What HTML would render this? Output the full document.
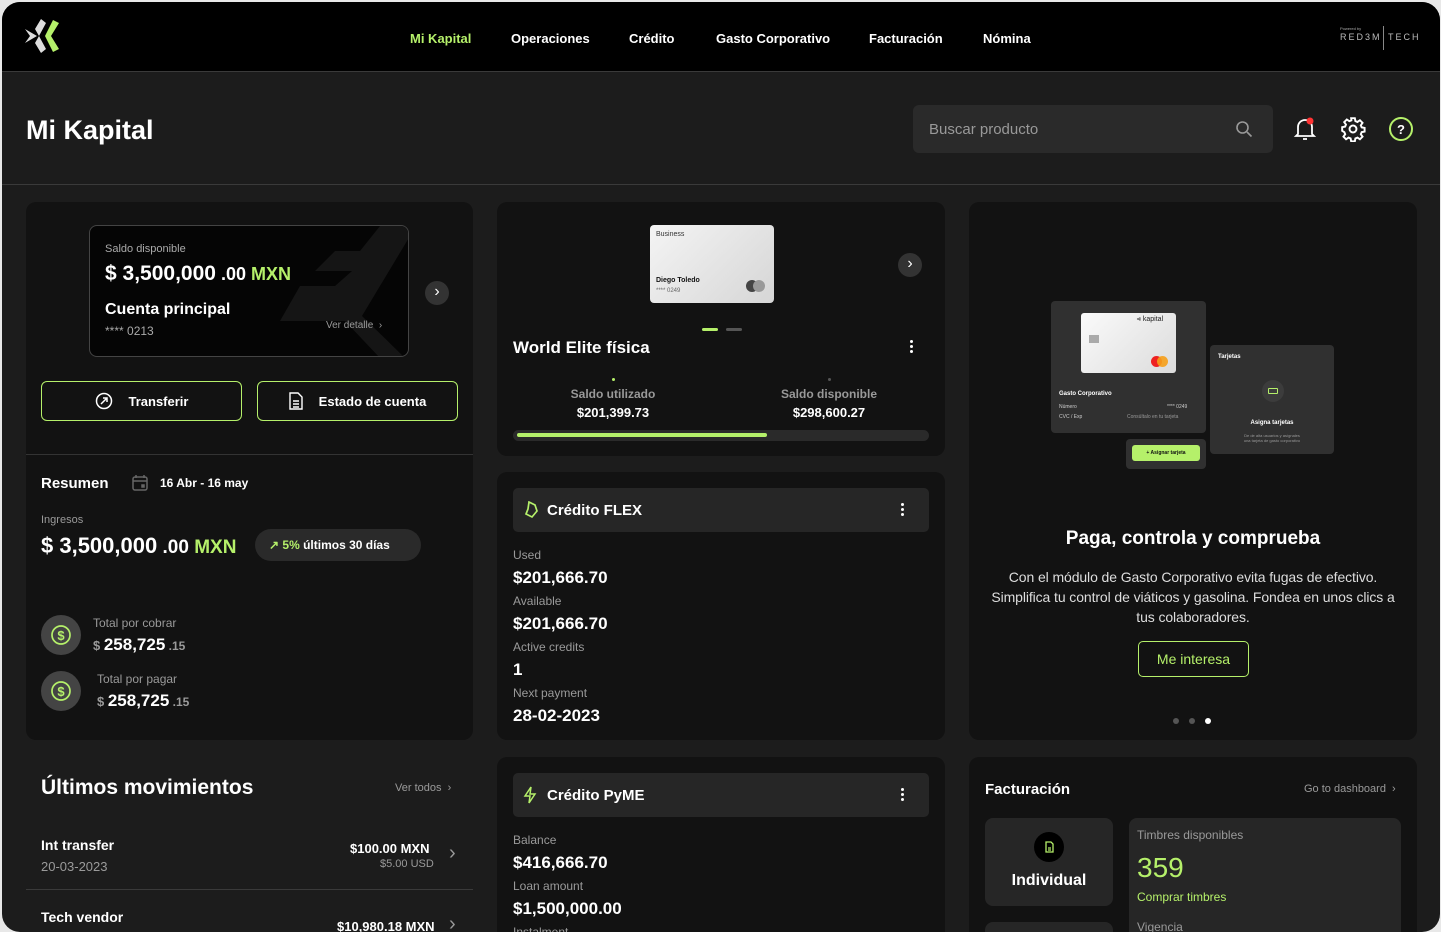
<!DOCTYPE html>
<html><head><meta charset="utf-8"><style>
*{margin:0;padding:0;box-sizing:border-box}
body{width:1441px;height:932px;background:#e8e8e8;font-family:"Liberation Sans",sans-serif;color:#fff;overflow:hidden;position:relative}
.a{position:absolute}
.frame{position:absolute;left:2px;top:2px;width:1438px;height:930px;background:#1c1c1c;border-radius:18px 18px 18px 18px;overflow:hidden}
.nav{position:absolute;left:0;top:0;width:100%;height:70px;background:#000;border-bottom:1px solid #3a3a3a}
.nav span{position:absolute;top:29px;font-size:13px;font-weight:bold;color:#fff}
.nav span.gg{color:#b5f06a}
.card{position:absolute;background:#121212;border-radius:10px}
.g{color:#b5f06a}
.mu{color:#9a9a9a}
.b{font-weight:bold}
.btn{position:absolute;border:1px solid #b5f06a;border-radius:6px;height:40px;font-size:13px;font-weight:bold;display:flex;align-items:center;justify-content:center;gap:16px}
.hdr{position:absolute;background:#262626;border-radius:5px;height:44px}
.lbl{position:absolute;font-size:12px;color:#9a9a9a}
.val{position:absolute;font-size:17px;font-weight:bold}
.dots{position:absolute;width:4px}
.dots i{display:block;width:3px;height:3px;background:#fff;border-radius:50%;margin-bottom:2px}
</style></head><body>
<div class="frame">
<div class="nav">
 <svg class="a" style="left:22px;top:14px" width="36" height="40" viewBox="0 0 36 40"><path d="M1 13 L13 20 L1 27 L6 20Z" fill="#ddd"/><path d="M17 3 L22 7 L15 20 L22 33 L17 37 L11 27 L15 20 L11 13Z" fill="#ddd"/><path d="M29 4 L35 7 L27 20 L35 33 L29 36 L21 20Z" fill="#b5f06a"/></svg>
 <span class="gg" style="left:408px">Mi Kapital</span>
 <span style="left:509px">Operaciones</span>
 <span style="left:627px">Crédito</span>
 <span style="left:714px">Gasto Corporativo</span>
 <span style="left:867px">Facturación</span>
 <span style="left:981px">Nómina</span>
 <div class="a" style="left:1338px;top:24px;font-size:4px;color:#aaa">Powered by</div>
 <div class="a" style="left:1338px;top:30px;font-size:9px;letter-spacing:2px;color:#bbb">RED3M</div>
 <div class="a" style="left:1381px;top:24px;width:1px;height:24px;background:#888"></div>
 <div class="a" style="left:1386px;top:30px;font-size:9px;letter-spacing:2px;color:#bbb">TECH</div>
</div>
<div class="a b" style="left:24px;top:113px;font-size:27px">Mi Kapital</div>
<div class="a" style="left:911px;top:103px;width:360px;height:48px;background:#2a2a2a;border-radius:6px"><span class="a" style="left:16px;top:16px;font-size:15px;color:#999">Buscar producto</span>
<svg class="a" style="left:322px;top:15px" width="18" height="18" viewBox="0 0 18 18" fill="none" stroke="#999" stroke-width="1.6"><circle cx="7.5" cy="7.5" r="5.5"/><path d="M12 12l4.5 4.5"/></svg></div>
<svg class="a" style="left:1291px;top:114px" width="24" height="26" viewBox="0 0 24 26" fill="none" stroke="#fff" stroke-width="1.8"><path d="M5 18V11a7 7 0 0114 0v7l2 2H3z"/><path d="M10 23h4"/><circle cx="17" cy="5" r="3.5" fill="#f33" stroke="none"/></svg>
<svg class="a" style="left:1338px;top:114px" width="26" height="26" viewBox="0 0 24 24" fill="none" stroke="#fff" stroke-width="1.8"><circle cx="12" cy="12" r="3.2"/><path d="M10.3 2h3.4l.5 2.7 1.9.8 2.3-1.6 2.4 2.4-1.6 2.3.8 1.9 2.7.5v3.4l-2.7.5-.8 1.9 1.6 2.3-2.4 2.4-2.3-1.6-1.9.8-.5 2.7h-3.4l-.5-2.7-1.9-.8-2.3 1.6-2.4-2.4 1.6-2.3-.8-1.9L2 13.7v-3.4l2.7-.5.8-1.9-1.6-2.3 2.4-2.4 2.3 1.6 1.9-.8z"/></svg>
<svg class="a" style="left:1386px;top:114px" width="26" height="26" viewBox="0 0 26 26" fill="none" stroke="#b5f06a" stroke-width="2"><circle cx="13" cy="13" r="11"/><text x="13" y="18" font-size="13" font-weight="bold" fill="#fff" stroke="none" text-anchor="middle" font-family="Liberation Sans">?</text></svg>
<div class="a" style="left:0;top:182px;width:100%;height:1px;background:#3a3a3a"></div>

<!-- LEFT -->
<div class="card" style="left:24px;top:200px;width:447px;height:538px">
 <div class="a" style="left:63px;top:23px;width:320px;height:132px;background:#050505;border:1px solid #444;border-radius:8px;overflow:hidden">
  <svg class="a" style="left:0;top:0" width="320" height="132" viewBox="0 0 320 132"><path d="M290 0 H320 V10 L272 90 L315 132 H290 L255 95 H190 L210 60 H245 L262 45 H225 L245 25 H270Z" fill="#151515"/></svg>
  <div class="a mu" style="left:15px;top:17px;font-size:11px;color:#aaa">Saldo disponible</div>
  <div class="a b" style="left:15px;top:36px;font-size:21px">$ 3,500,000<span style="font-size:18px"> .00</span><span class="g" style="font-size:18px"> MXN</span></div>
  <div class="a b" style="left:15px;top:75px;font-size:16px">Cuenta principal</div>
  <div class="a" style="left:15px;top:98px;font-size:12px;color:#aaa">**** 0213</div>
  <div class="a" style="left:236px;top:94px;font-size:10px;color:#999">Ver detalle &nbsp;›</div>
 </div>
 <div class="a" style="left:399px;top:79px;width:24px;height:24px;border-radius:50%;background:#333;text-align:center;line-height:22px;font-size:16px">›</div>
 <div class="btn" style="left:15px;top:179px;width:201px"><svg width="18" height="18" viewBox="0 0 18 18" fill="none" stroke="#fff" stroke-width="1.5"><circle cx="9" cy="9" r="7.5"/><path d="M6 12l6-6M8 6h4v4"/></svg>Transferir</div>
 <div class="btn" style="left:231px;top:179px;width:201px"><svg width="14" height="18" viewBox="0 0 14 18" fill="none" stroke="#fff" stroke-width="1.4"><path d="M1 1h8l4 4v12H1z M4 9h6M4 12h6M4 15h6"/></svg>Estado de cuenta</div>
 <div class="a" style="left:0;top:252px;width:447px;height:1px;background:#333"></div>
 <div class="a b" style="left:15px;top:273px;font-size:15px">Resumen</div>
 <svg class="a" style="left:106px;top:273px" width="16" height="16" viewBox="0 0 16 16" fill="none" stroke="#666" stroke-width="1.5"><rect x="1" y="2" width="14" height="13" rx="2"/><path d="M1 6h14M4 0v3M12 0v3"/><rect x="10" y="10" width="2" height="2" fill="#666"/></svg>
 <div class="a b" style="left:134px;top:274px;font-size:12px">16 Abr - 16 may</div>
 <div class="a mu" style="left:15px;top:312px;font-size:11px">Ingresos</div>
 <div class="a b" style="left:15px;top:331px;font-size:22px">$ 3,500,000<span style="font-size:19px"> .00</span><span class="g" style="font-size:19px"> MXN</span></div>
 <div class="a" style="left:229px;top:327px;width:166px;height:32px;background:#2a2a2a;border-radius:16px;font-size:12px;font-weight:bold;line-height:32px;padding-left:14px"><span class="g">↗ 5%</span> últimos 30 días</div>
 <div class="a" style="left:15px;top:413px;width:40px;height:40px;border-radius:50%;background:#444"><svg width="40" height="40" viewBox="0 0 40 40" fill="none" stroke="#b5f06a" stroke-width="1.7"><circle cx="20" cy="20" r="9"/><text x="20" y="25" text-anchor="middle" font-size="13" font-weight="bold" fill="#b5f06a" stroke="none" font-family="Liberation Sans">$</text></svg></div>
 <div class="a mu" style="left:67px;top:414px;font-size:12px">Total por cobrar</div>
 <div class="a b" style="left:67px;top:433px;font-size:17px"><span class="mu" style="font-size:13px">$ </span>258,725<span class="mu" style="font-size:12px"> .15</span></div>
 <div class="a" style="left:15px;top:469px;width:40px;height:40px;border-radius:50%;background:#444"><svg width="40" height="40" viewBox="0 0 40 40" fill="none" stroke="#b5f06a" stroke-width="1.7"><circle cx="20" cy="20" r="9"/><text x="20" y="25" text-anchor="middle" font-size="13" font-weight="bold" fill="#b5f06a" stroke="none" font-family="Liberation Sans">$</text></svg></div>
 <div class="a mu" style="left:71px;top:470px;font-size:12px">Total por pagar</div>
 <div class="a b" style="left:71px;top:489px;font-size:17px"><span class="mu" style="font-size:13px">$ </span>258,725<span class="mu" style="font-size:12px"> .15</span></div>
</div>
<div class="a b" style="left:39px;top:774px;font-size:21px">Últimos movimientos</div>
<div class="a mu" style="left:393px;top:780px;font-size:11px">Ver todos &nbsp;›</div>
<div class="a b" style="left:39px;top:835px;font-size:14px">Int transfer</div>
<div class="a mu" style="left:39px;top:857px;font-size:13px">20-03-2023</div>
<div class="a b" style="left:348px;top:839px;font-size:13px">$100.00 MXN</div>
<div class="a mu" style="left:378px;top:856px;font-size:11px">$5.00 USD</div>
<div class="a mu" style="left:447px;top:840px;font-size:20px">›</div>
<div class="a" style="left:24px;top:887px;width:447px;height:1px;background:#3a3a3a"></div>
<div class="a b" style="left:39px;top:907px;font-size:14px">Tech vendor</div>
<div class="a b" style="left:335px;top:917px;font-size:13px">$10,980.18 MXN</div>
<div class="a mu" style="left:447px;top:911px;font-size:20px">›</div>

<!-- MIDDLE -->
<div class="card" style="left:495px;top:200px;width:448px;height:254px">
 <div class="a" style="left:153px;top:23px;width:124px;height:78px;border-radius:4px;background:linear-gradient(135deg,#f4f4f4,#d6d6d6)">
  <div class="a" style="left:6px;top:6px;font-size:7px;color:#333">Business</div>
  <div class="a" style="left:6px;top:52px;font-size:7px;color:#111;font-weight:bold">Diego Toledo</div>
  <div class="a" style="left:6px;top:63px;font-size:6px;color:#666">**** 0249</div>
  <div class="a" style="left:96px;top:55px;width:12px;height:12px;border-radius:50%;background:#444"></div><div class="a" style="left:103px;top:55px;width:12px;height:12px;border-radius:50%;background:#999"></div>
 </div>
 <div class="a" style="left:401px;top:51px;width:24px;height:24px;border-radius:50%;background:#333;text-align:center;line-height:22px;font-size:16px">›</div>
 <div class="a" style="left:205px;top:126px;width:16px;height:3px;border-radius:2px;background:#b5f06a"></div>
 <div class="a" style="left:229px;top:126px;width:16px;height:3px;border-radius:2px;background:#555"></div>
 <div class="a b" style="left:16px;top:136px;font-size:17px">World Elite física</div>
 <div class="dots" style="left:413px;top:138px"><i></i><i></i><i></i></div>
 <div class="a" style="left:115px;top:176px;width:3px;height:3px;border-radius:50%;background:#b5f06a"></div>
 <div class="a" style="left:331px;top:176px;width:3px;height:3px;border-radius:50%;background:#555"></div>
 <div class="a b" style="left:56px;top:185px;font-size:12px;color:#999;width:120px;text-align:center;white-space:nowrap">Saldo utilizado</div>
 <div class="a b" style="left:56px;top:203px;font-size:13px;width:120px;text-align:center">$201,399.73</div>
 <div class="a b" style="left:272px;top:185px;font-size:12px;color:#999;width:120px;text-align:center;white-space:nowrap">Saldo disponible</div>
 <div class="a b" style="left:272px;top:203px;font-size:13px;width:120px;text-align:center">$298,600.27</div>
 <div class="a" style="left:16px;top:228px;width:416px;height:11px;border-radius:6px;background:#2a2a2a"><div class="a" style="left:4px;top:3px;width:250px;height:4px;border-radius:2px;background:#b5f06a"></div></div>
</div>
<div class="card" style="left:495px;top:470px;width:448px;height:268px">
 <div class="hdr" style="left:16px;top:16px;width:416px">
  <svg class="a" style="left:10px;top:13px" width="16" height="18" viewBox="0 0 16 18" fill="none" stroke="#b5f06a" stroke-width="1.7"><path d="M6 1 L12 4 L14 10 L9 16 L3 13 L5 8 Z"/></svg>
  <div class="a b" style="left:34px;top:14px;font-size:15px">Crédito FLEX</div>
  <div class="dots" style="left:388px;top:15px"><i></i><i></i><i></i></div>
 </div>
 <div class="lbl" style="left:16px;top:76px">Used</div><div class="val" style="left:16px;top:96px">$201,666.70</div>
 <div class="lbl" style="left:16px;top:122px">Available</div><div class="val" style="left:16px;top:142px">$201,666.70</div>
 <div class="lbl" style="left:16px;top:168px">Active credits</div><div class="val" style="left:16px;top:188px">1</div>
 <div class="lbl" style="left:16px;top:214px">Next payment</div><div class="val" style="left:16px;top:234px">28-02-2023</div>
</div>
<div class="card" style="left:495px;top:755px;width:448px;height:200px">
 <div class="hdr" style="left:16px;top:16px;width:416px">
  <svg class="a" style="left:10px;top:13px" width="14" height="18" viewBox="0 0 14 18" fill="none" stroke="#b5f06a" stroke-width="1.5"><path d="M8 1 L2 10 H7 L6 17 L12 8 H7 Z"/></svg>
  <div class="a b" style="left:34px;top:14px;font-size:15px">Crédito PyME</div>
  <div class="dots" style="left:388px;top:15px"><i></i><i></i><i></i></div>
 </div>
 <div class="lbl" style="left:16px;top:76px">Balance</div><div class="val" style="left:16px;top:96px">$416,666.70</div>
 <div class="lbl" style="left:16px;top:122px">Loan amount</div><div class="val" style="left:16px;top:142px">$1,500,000.00</div>
 <div class="lbl" style="left:16px;top:168px">Instalment</div>
</div>

<!-- RIGHT -->
<div class="card" style="left:967px;top:200px;width:448px;height:538px">
 <div class="a" style="left:82px;top:99px;width:155px;height:132px;background:#303030;border-radius:4px">
  <div class="a" style="left:30px;top:12px;width:95px;height:60px;border-radius:3px;background:linear-gradient(135deg,#fafafa,#dcdcdc)">
   <div class="a" style="left:56px;top:3px;font-size:7px;color:#222">⪡ kapital</div>
   <div class="a" style="left:8px;top:22px;width:10px;height:8px;background:#aaa"></div>
   <div class="a" style="left:70px;top:43px;width:11px;height:11px;border-radius:50%;background:#e22"></div><div class="a" style="left:76px;top:43px;width:11px;height:11px;border-radius:50%;background:#f6a01a;opacity:.9"></div>
  </div>
  <div class="a b" style="left:8px;top:90px;font-size:6px">Gasto Corporativo</div>
  <div class="a" style="left:8px;top:103px;font-size:5px;color:#ccc">Número</div>
  <div class="a" style="left:8px;top:113px;font-size:5px;color:#ccc">CVC / Exp</div>
  <div class="a" style="left:116px;top:103px;font-size:5px;color:#ccc">**** 0249</div>
  <div class="a" style="left:76px;top:113px;font-size:5px;color:#999">Consúltalo en tu tarjeta</div>
 </div>
 <div class="a" style="left:157px;top:237px;width:80px;height:30px;background:#303030;border-radius:4px"><div class="a" style="left:6px;top:6px;width:68px;height:16px;border-radius:3px;background:#b5f06a;color:#111;font-size:5px;font-weight:bold;text-align:center;line-height:16px">+ Asignar tarjeta</div></div>
 <div class="a" style="left:241px;top:143px;width:124px;height:109px;background:#303030;border-radius:4px">
  <div class="a b" style="left:8px;top:9px;font-size:6px">Tarjetas</div>
  <div class="a" style="left:52px;top:35px;width:22px;height:22px;border-radius:50%;background:#3c3c3c"><div class="a" style="left:6px;top:8px;width:10px;height:6px;border:1px solid #b5f06a;border-radius:1px"></div></div>
  <div class="a b" style="left:0;top:75px;width:124px;text-align:center;font-size:6px">Asigna tarjetas</div>
  <div class="a" style="left:0;top:88px;width:124px;text-align:center;font-size:4px;color:#999">De de alta usuarios y asígnales<br>una tarjeta de gasto corporativo</div>
 </div>
 <div class="a b" style="left:0;top:326px;width:448px;text-align:center;font-size:19px">Paga, controla y comprueba</div>
 <div class="a" style="left:22px;top:365px;width:404px;text-align:center;font-size:14px;line-height:20px;color:#ddd;letter-spacing:-0.1px">Con el módulo de Gasto Corporativo evita fugas de efectivo. Simplifica tu control de viáticos y gasolina. Fondea en unos clics a tus colaboradores.</div>
 <div class="a g" style="left:169px;top:439px;width:111px;height:36px;border:1px solid #b5f06a;border-radius:5px;text-align:center;line-height:34px;font-size:14px">Me interesa</div>
 <div class="a" style="left:204px;top:516px;width:6px;height:6px;border-radius:50%;background:#555"></div>
 <div class="a" style="left:220px;top:516px;width:6px;height:6px;border-radius:50%;background:#555"></div>
 <div class="a" style="left:236px;top:516px;width:6px;height:6px;border-radius:50%;background:#fff"></div>
</div>
<div class="card" style="left:967px;top:755px;width:448px;height:200px">
 <div class="a b" style="left:16px;top:24px;font-size:15px">Facturación</div>
 <div class="a mu" style="left:335px;top:26px;font-size:11px">Go to dashboard &nbsp;›</div>
 <div class="a" style="left:16px;top:61px;width:128px;height:88px;background:#262626;border-radius:8px">
  <div class="a" style="left:49px;top:14px;width:30px;height:30px;border-radius:50%;background:#000"><svg width="30" height="30" viewBox="0 0 30 30" fill="none" stroke="#b5f06a" stroke-width="1.3"><path d="M12 10h5l2 2v8h-7z M14 16h3M14 18h3"/></svg></div>
  <div class="a b" style="left:0;top:54px;width:128px;text-align:center;font-size:16px">Individual</div>
 </div>
 <div class="a" style="left:16px;top:165px;width:128px;height:40px;background:#262626;border-radius:8px"></div>
 <div class="a" style="left:160px;top:61px;width:272px;height:160px;background:#262626;border-radius:8px">
  <div class="a mu" style="left:8px;top:10px;font-size:12px">Timbres disponibles</div>
  <div class="a g" style="left:8px;top:34px;font-size:28px">359</div>
  <div class="a g" style="left:8px;top:72px;font-size:12px">Comprar timbres</div>
  <div class="a mu" style="left:8px;top:102px;font-size:12px">Vigencia</div>
 </div>
</div>
</div>
</body></html>
